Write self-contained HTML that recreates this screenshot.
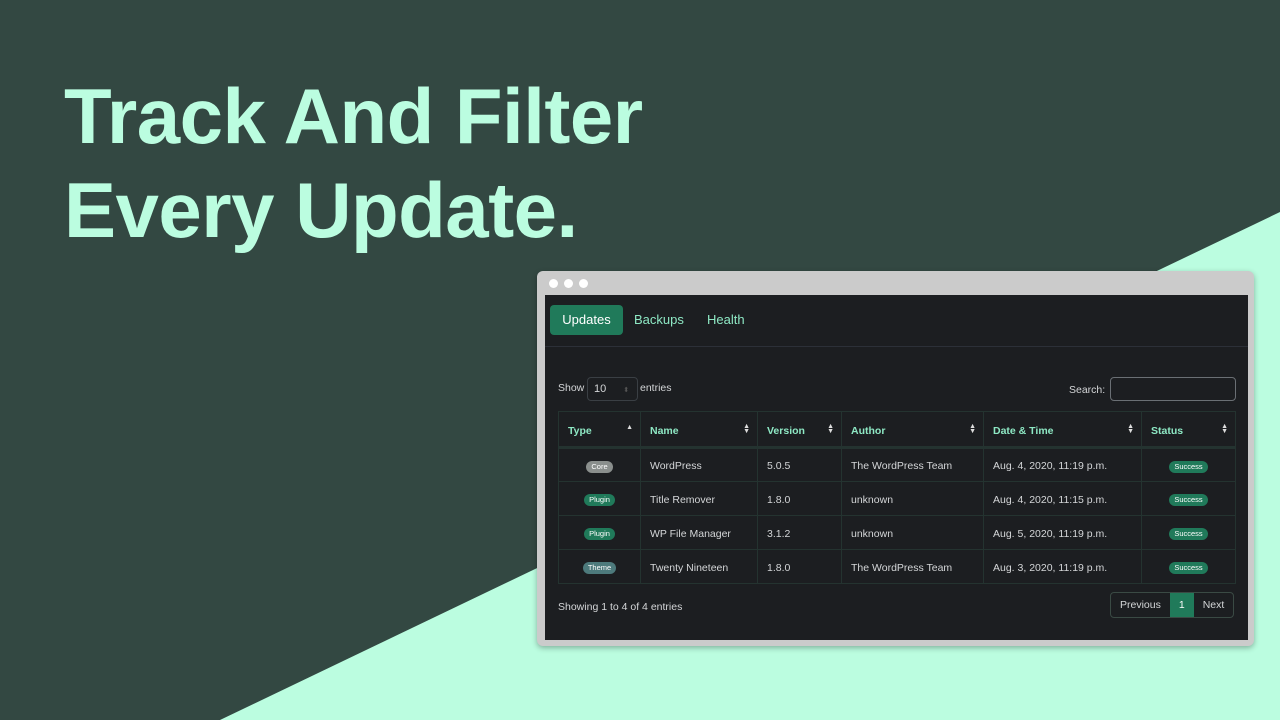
<!DOCTYPE html>
<html><head><meta charset="utf-8"><style>
*{margin:0;padding:0;box-sizing:border-box}
body{width:1280px;height:720px;overflow:hidden;background:#334842;font-family:"Liberation Sans",sans-serif;position:relative}
.bg{position:absolute;left:0;top:0}
h1{position:absolute;left:64px;top:69px;color:#bbfde0;font-size:78px;font-weight:bold;line-height:94px;letter-spacing:-0.5px;white-space:nowrap}
.win{position:absolute;left:537px;top:271px;width:717px;height:375px;background:#cbcbcb;border-radius:6px;box-shadow:0 2px 6px rgba(0,0,0,.3)}
.dot{position:absolute;top:8px;width:9px;height:9px;border-radius:50%;background:#fff}
.in{position:absolute;left:8px;top:24px;width:703px;height:345px;background:#1c1e21;color:#d4d6d8;font-size:10.5px}
.tabs{height:52px;border-bottom:1px solid #2c3038;position:relative}
.tab{position:absolute;top:10px;height:30px;line-height:30px;font-size:13px;color:#8ee8c4}
.tab.a{left:5px;width:73px;background:#207a5a;color:#fff;border-radius:4px;text-align:center}
.sel{position:absolute;left:42px;top:82px;width:51px;height:24px;border:1px solid #3a3f44;border-radius:4px;padding:5px 6px;font-size:11px}
.srch{position:absolute;left:565px;top:82px;width:126px;height:24px;border:1px solid #6a6f74;border-radius:4px}
table{position:absolute;left:13px;top:116px;width:678px;border-collapse:collapse}
td,th{border:1px solid #243330;height:34px;padding:0 9px;text-align:left;font-size:10.5px;white-space:nowrap}
td{padding-top:2px}
th{color:#8ee8c4;height:36px;border-bottom:3px solid #243330;position:relative;padding-top:3px}
th span{position:absolute;right:7px;top:12px;font-size:7px;color:#ddd;line-height:5px}
.b{display:inline-block;font-size:7.5px;color:#fff;border-radius:6px;padding:1px 5px;line-height:10px}
.pag{position:absolute;left:565px;top:297px;height:26px;border:1px solid #3a4a44;border-radius:4px;display:flex;font-size:10.5px}
.pag div{padding:0 9px;line-height:24px}
</style></head><body>
<svg class="bg" width="1280" height="720"><polygon points="220,720 1280,212 1280,720" fill="#bbfde0"/></svg>
<h1>Track And Filter<br>Every Update.</h1>
<div class="win">
<div class="dot" style="left:12px"></div><div class="dot" style="left:27px"></div><div class="dot" style="left:42px"></div>
<div class="in">
<div class="tabs"><div class="tab a">Updates</div><div class="tab" style="left:89px">Backups</div><div class="tab" style="left:162px">Health</div></div>
<div style="position:absolute;left:13px;top:87px">Show</div>
<div class="sel">10 <span style="color:#555;font-size:7px;margin-left:14px">⬍</span></div>
<div style="position:absolute;left:95px;top:87px">entries</div>
<div style="position:absolute;left:524px;top:89px">Search:</div>
<div class="srch"></div>
<table>
<tr><th style="width:82px">Type<span style="top:13px">▲</span></th><th style="width:117px">Name<span>▲<br>▼</span></th><th style="width:84px">Version<span>▲<br>▼</span></th><th style="width:142px">Author<span>▲<br>▼</span></th><th style="width:158px">Date &amp; Time<span>▲<br>▼</span></th><th>Status<span>▲<br>▼</span></th></tr>
<tr><td style="text-align:center"><span class="b" style="background:#8a8f8d">Core</span></td><td>WordPress</td><td>5.0.5</td><td>The WordPress Team</td><td>Aug. 4, 2020, 11:19 p.m.</td><td style="text-align:center"><span class="b" style="background:#207a5a">Success</span></td></tr>
<tr><td style="text-align:center"><span class="b" style="background:#207a5a">Plugin</span></td><td>Title Remover</td><td>1.8.0</td><td>unknown</td><td>Aug. 4, 2020, 11:15 p.m.</td><td style="text-align:center"><span class="b" style="background:#207a5a">Success</span></td></tr>
<tr><td style="text-align:center"><span class="b" style="background:#207a5a">Plugin</span></td><td>WP File Manager</td><td>3.1.2</td><td>unknown</td><td>Aug. 5, 2020, 11:19 p.m.</td><td style="text-align:center"><span class="b" style="background:#207a5a">Success</span></td></tr>
<tr><td style="text-align:center"><span class="b" style="background:#4d7a7c">Theme</span></td><td>Twenty Nineteen</td><td>1.8.0</td><td>The WordPress Team</td><td>Aug. 3, 2020, 11:19 p.m.</td><td style="text-align:center"><span class="b" style="background:#207a5a">Success</span></td></tr>
</table>
<div style="position:absolute;left:13px;top:306px">Showing 1 to 4 of 4 entries</div>
<div class="pag"><div>Previous</div><div style="background:#207a5a;color:#fff">1</div><div>Next</div></div>
</div></div>
</body></html>
